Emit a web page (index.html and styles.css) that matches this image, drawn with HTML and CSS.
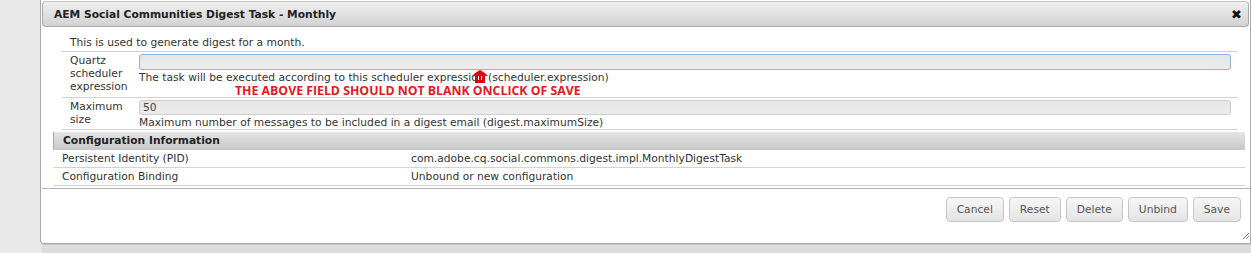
FILE: index.html
```html
<!DOCTYPE html>
<html lang="en">
<head>
  <meta charset="UTF-8" />
  <title>AEM Social Communities Digest Task - Monthly</title>
  <link rel="stylesheet" href="styles.css">
</head>
<body>
  <div class="page">
    <div class="dialog">
      <div class="titlebar">
        <span class="title">AEM Social Communities Digest Task - Monthly</span>
        <span class="close">&#10006;</span>
      </div>

      <div class="content">
        <table class="form">
          <tr>
            <td colspan="2" class="desc">This is used to generate digest for a month.</td>
          </tr>
          <tr>
            <td class="label">Quartz scheduler expression</td>
            <td class="value">
              <input class="field focused" type="text" value="">
              <div class="help">The task will be executed according to this scheduler expression (scheduler.expression)</div>
              <div class="warn">THE ABOVE FIELD SHOULD NOT BLANK ONCLICK OF SAVE</div>
              <svg class="pointer" width="16" height="13" viewBox="0 0 16 13">
                <path d="M8 0 Q12 2 16 6 L13 6 L13 13 L3 13 L3 6 L0 6 Q4 2 8 0 Z" fill="#e3000f"/>
                <rect x="6" y="6" width="1" height="4" fill="#fff"/>
                <rect x="9" y="6" width="1" height="4" fill="#fff"/>
              </svg>
            </td>
          </tr>
          <tr>
            <td class="label">Maximum size</td>
            <td class="value">
              <input class="field small" type="text" value="50">
              <div class="help">Maximum number of messages to be included in a digest email (digest.maximumSize)</div>
            </td>
          </tr>
        </table>

        <div class="info-head">Configuration Information</div>
        <table class="info">
          <tr>
            <td class="key">Persistent Identity (PID)</td>
            <td>com.adobe.cq.social.commons.digest.impl.MonthlyDigestTask</td>
          </tr>
          <tr>
            <td class="key">Configuration Binding</td>
            <td>Unbound or new configuration</td>
          </tr>
        </table>
      </div>

      <div class="buttons">
        <button>Cancel</button>
        <button>Reset</button>
        <button>Delete</button>
        <button>Unbind</button>
        <button>Save</button>
        <svg class="grip" width="6" height="6" viewBox="0 0 6 6">
          <path d="M0 6 L6 0 M3 6 L6 3" stroke="#777" stroke-width="1"/>
        </svg>
      </div>
    </div>
    <div class="under"></div>
  </div>
</body>
</html>
```

FILE: styles.css
```css
body {
  margin: 0;
  background: #e9e9e9;
  font-family: "DejaVu Sans", sans-serif;
  font-size: 10.7px;
  color: #333;
  overflow: hidden;
}
.page {
  padding-left: 40px;
  height: 253px;
  display: flex;
  flex-direction: column;
}
.dialog {
  background: #fff;
  border: 1px solid #a9a9a9;
  border-top: none;
  border-radius: 0 0 0 4px;
  padding: 1px 1px 0 1px;
  height: 242px;
  display: flex;
  flex-direction: column;
}
.titlebar {
  height: 24px;
  border: 1px solid #a8a8a8;
  border-top-color: #c4c4c4;
  border-radius: 4px;
  background: linear-gradient(#efefef, #d2d2d2);
  display: flex;
  align-items: center;
  justify-content: space-between;
  padding: 0 6px 0 11px;
}
.title {
  font-weight: bold;
  color: #222;
}
.close {
  font-size: 13px;
  font-weight: bold;
  color: #111;
}
.content {
  padding: 7px 11px 0 20px;
  flex: 1;
}
table {
  border-collapse: collapse;
  width: 100%;
}
td {
  padding: 0;
  line-height: 13px;
  vertical-align: top;
}
.form tr {
  border-bottom: 1px solid #d3d3d3;
}
.desc {
  padding: 2px 8px 2px;
}
.label {
  width: 61px;
  padding: 2px 8px 2px 8px;
}
.value {
  position: relative;
  padding: 2px 7px 0 0;
}
.field {
  display: block;
  box-sizing: border-box;
  width: 100%;
  height: 16px;
  margin: 0;
  padding: 0 3px;
  border: 1px solid #cdcdcd;
  border-radius: 3px;
  background: linear-gradient(#e6e6e6, #ececec);
  font: inherit;
  color: #444;
}
.field.focused {
  border-color: #8fb2e6;
  outline: none;
}
.field.small {
  height: 15px;
  line-height: 13px;
}
.help {
  padding-top: 1px;
}
.warn {
  color: #e3191b;
  font-family: "Open Sans", sans-serif;
  font-weight: bold;
  font-size: 12.3px;
  padding-left: 96px;
}
.pointer {
  position: absolute;
  left: 333px;
  top: 18px;
}
.info-head {
  margin: 2px -7px 0 -9px;
  height: 18px;
  line-height: 18px;
  padding-left: 9px;
  border-left: 1px solid #a9a9a9;
  background: linear-gradient(#e4e4e4, #c8c8c8);
  font-weight: bold;
  color: #222;
}
.info {
  margin-left: -9px;
  width: calc(100% + 16px);
}
.info tr {
  border-bottom: 1px solid #d3d3d3;
}
.info td {
  line-height: 17px;
}
.info .key {
  width: 349px;
  padding-left: 9px;
}
.buttons {
  border-top: 1px solid #b3b3b3;
  margin-right: -2px;
  height: 46px;
  display: flex;
  justify-content: flex-end;
  align-items: flex-start;
  gap: 5px;
  padding: 8px 10px 0 0;
  position: relative;
}
button {
  height: 25px;
  padding: 0 10px;
  border: 1px solid #c6c6c6;
  border-radius: 4px;
  background: linear-gradient(#f6f6f6, #e4e4e4);
  font: inherit;
  color: #555;
}
.grip {
  position: absolute;
  right: 2px;
  bottom: 4px;
}
.under {
  margin-left: 2px;
  flex: 1;
  border-top: 1px solid #c6c6c6;
  background: #dcdcdc;
}
```
